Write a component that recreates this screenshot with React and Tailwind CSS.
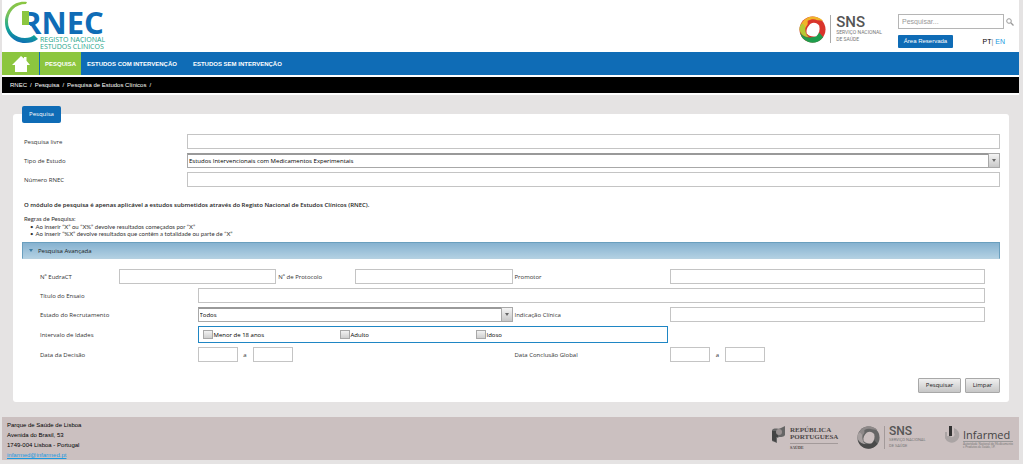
import React, { useState } from "react";

const inputClass =
  "block w-full h-[15px] px-1 bg-white border border-[#c4c4c4] text-[6px] outline-none";

const Select = ({ id, options }) => (
  <div className="relative w-full">
    <select
      id={id}
      className="block w-full h-[15px] pl-px pr-4 bg-white border border-[#a8a8a8] border-t-2 border-t-[#999999] text-[6px] leading-[11px] text-black appearance-none outline-none"
    >
      {options.map((option) => (
        <option key={option}>{option}</option>
      ))}
    </select>
    <span className="absolute right-0 top-0 w-3 h-[15px] flex items-center justify-center border border-[#a8a8a8] bg-linear-to-b from-[#f4f4f4] to-[#c8c8c8] pointer-events-none">
      <svg width="4" height="3" viewBox="0 0 4 3">
        <path d="M0 0h4L2 3z" fill="#666" />
      </svg>
    </span>
  </div>
);

const RnecLogo = () => (
  <a href="#" aria-label="RNEC" className="relative block w-[104px] h-[52px]">
    <svg className="absolute left-0 top-0" width="104" height="52" viewBox="0 0 104 52">
      <defs>
        <linearGradient id="arc" x1="0.7" y1="0" x2="0.5" y2="1">
          <stop offset="0" stopColor="#8cc63f" />
          <stop offset="0.4" stopColor="#7cc35a" />
          <stop offset="0.75" stopColor="#12a596" />
          <stop offset="1" stopColor="#0f6cb6" />
        </linearGradient>
      </defs>
      <path
        d="M25 2C12 0 3 10 3 22c0 12 9 21 20 21 5 0 9-1 13-4l-4-4c-2 2-5 3-9 3C13 38 6 31 6 22 6 12 13 4 24 4z"
        fill="url(#arc)"
      />
    </svg>
    <span className="absolute left-[19px] top-[4px] font-['Open_Sans'] font-bold text-[31px] leading-[36px] text-[#0f6cb6]">
      RNEC
    </span>
    <svg className="absolute left-0 top-0" width="104" height="52" viewBox="0 0 104 52">
      <path d="M20 25h8v9l-3 2h-5z" fill="#fff" />
      <path d="M20 11h7v14h-7z" fill="#8cc63f" />
    </svg>
    <span className="absolute left-[38px] top-[36px] font-['Open_Sans'] font-medium text-[7px] leading-[7px] text-[#1ba58a] whitespace-nowrap">
      REGISTO NACIONAL
      <br />
      ESTUDOS CLÍNICOS
    </span>
  </a>
);

const SnsLogo = ({ gray }) => {
  const colors = gray
    ? ["#666", "#8e8989", "#4a4a4a", "#a7a0a0"]
    : ["#d9342b", "#f0b429", "#1f9d4d", "#b5c934"];
  return (
    <div className="flex items-center gap-1">
      <svg
        className={gray ? "w-[23px] h-[23px]" : "w-[27px] h-[27px]"}
        viewBox="0 0 28 28"
      >
        <circle cx="14" cy="14" r="13.500" fill={colors[0]} />
        <path d="M2 9C5 2 12-1 18 1c3 1 5 2 7 4-5-1-8-1-10 2C10 7 8 9 6 14z" fill={colors[1]} />
        <path d="M0.500 14c0-3 1-5 2-6 2 0 4 2 4 5 0 4 1 7 4 9-5 0-9-3-10-8z" fill={colors[3]} />
        <path d="M1 17c3 4 7 6 12 5 4 0 6-2 8-5l4 5c-5 7-14 7-19 3-3-2-4-5-5-8z" fill={colors[2]} />
        <path d="M9 5c5-3 11-2 13 3-5-2-9-1-13 2z" fill={colors[0]} />
        <path
          d="M12 8c3-2 7-1 9 2 1 4 0 8-3 11-4 1-8 0-10-3-1-4 1-7 4-10z"
          fill={gray ? "#cbc0c0" : "#fff"}
        />
      </svg>
      <div
        className={
          gray
            ? "border-l border-[#a39a9a] pl-1 font-[Roboto] text-[#555]"
            : "border-l border-[#aaa] pl-[5px] font-[Roboto] text-[#555]"
        }
      >
        <div
          className={
            gray
              ? "text-[12px] leading-[11px] font-medium"
              : "text-[15px] leading-[14px] font-medium"
          }
        >
          SNS
        </div>
        <div
          className={
            gray
              ? "text-[4px] leading-[6px] text-[#777] whitespace-nowrap"
              : "text-[5px] leading-[7px] text-[#777] whitespace-nowrap"
          }
        >
          SERVIÇO NACIONAL
          <br />
          DE SAÚDE
        </div>
      </div>
    </div>
  );
};

const Header = () => (
  <header className="flex justify-between h-[52px] bg-white">
    <RnecLogo />
    <div className="flex items-start pr-[5px]">
      <div className="pt-[15px] pr-4">
        <SnsLogo />
      </div>
      <div className="w-[116px] pt-[14px]">
        <div className="flex items-center gap-[2px]">
          <input
            type="text"
            aria-label="Pesquisar"
            placeholder="Pesquisar..."
            className="w-[106px] h-[15px] px-[3px] border border-[#b5b5b5] text-[7px] placeholder:text-[#999] outline-none"
          />
          <svg width="8" height="8" viewBox="0 0 8 8" fill="none" stroke="#999">
            <circle cx="3" cy="3" r="2.300" />
            <path d="M4.800 4.800L7.500 7.500" strokeWidth="1.300" />
          </svg>
        </div>
        <div className="flex items-center justify-between mt-[5px] pr-[9px]">
          <button
            type="button"
            className="w-[55px] h-[13px] rounded-[1px] bg-[#0f6cb6] text-white text-[6px] leading-[13px] whitespace-nowrap"
          >
            Área Reservada
          </button>
          <div className="text-[7px] leading-[13px] pt-px">
            <a href="#pt" className="text-black">
              PT
            </a>
            <span className="text-[#888]">| </span>
            <a href="#en" className="text-[#1b9ae0]">
              EN
            </a>
          </div>
        </div>
      </div>
    </div>
  </header>
);

const Nav = () => (
  <nav className="flex h-[23px] bg-[#0f6cb6] text-white text-[6px] font-bold leading-[24px] whitespace-nowrap">
    <a
      href="#"
      aria-label="Início"
      className="w-[37px] flex items-center justify-center bg-[#8cc63f]"
    >
      <svg width="18" height="16" viewBox="0 0 18 16" fill="#fff">
        <path d="M9 0l3 2.500V1h2.500v3.700L18 9h-3v7H3V9H0z" />
      </svg>
    </a>
    <a href="#pesquisa" className="ml-px px-[5px] bg-[#8cc63f]">
      PESQUISA
    </a>
    <a href="#com" className="ml-[6px]">
      ESTUDOS COM INTERVENÇÃO
    </a>
    <a href="#sem" className="ml-4">
      ESTUDOS SEM INTERVENÇÃO
    </a>
  </nav>
);

const Breadcrumbs = () => (
  <div className="flex gap-[3px] h-[20px] pl-2 border-y-2 border-white bg-black text-white text-[6px] leading-[16px]">
    <a href="#">RNEC</a>
    <span>/</span>
    <a href="#pesquisa">Pesquisa</a>
    <span>/</span>
    <a href="#estudos">Pesquisa de Estudos Clínicos</a>
    <span>/</span>
  </div>
);

const DateRange = ({ id }) => (
  <div className="flex items-center">
    <input id={id} type="text" className="w-[40px] h-[15px] border border-[#c4c4c4]" />
    <label htmlFor={`${id}-end`} className="w-[15px] text-center">
      a
    </label>
    <input id={`${id}-end`} type="text" className="w-[40px] h-[15px] border border-[#c4c4c4]" />
  </div>
);

const AdvancedSearch = () => (
  <div className="pl-[18px] pr-[15px] pt-[10px] grid grid-cols-12 items-center gap-y-1 whitespace-nowrap">
    <label htmlFor="eudract">Nº EudraCT</label>
    <input id="eudract" type="text" className={`${inputClass} col-span-2`} />
    <label htmlFor="protocolo" className="pl-[2px]">
      Nº de Protocolo
    </label>
    <input id="protocolo" type="text" className={`${inputClass} col-span-2`} />
    <label htmlFor="promotor" className="col-span-2 pl-[2px]">
      Promotor
    </label>
    <input id="promotor" type="text" className={`${inputClass} col-span-4`} />

    <label htmlFor="titulo" className="col-span-2">
      Título do Ensaio
    </label>
    <input id="titulo" type="text" className={`${inputClass} col-span-10`} />

    <label htmlFor="estado" className="col-span-2">
      Estado do Recrutamento
    </label>
    <div className="col-span-4">
      <Select id="estado" options={["Todos"]} />
    </div>
    <label htmlFor="indicacao" className="col-span-2 pl-[2px]">
      Indicação Clínica
    </label>
    <input id="indicacao" type="text" className={`${inputClass} col-span-4`} />

    <span className="col-span-2">Intervalo de Idades</span>
    <div
      role="group"
      aria-label="Intervalo de Idades"
      className="col-span-6 grid grid-cols-[137px_136px_1fr] items-center h-[17px] mr-[2px] pl-1 border border-[#1f86c4]"
    >
      {["Menor de 18 anos", "Adulto", "Idoso"].map((age) => (
        <label key={age} className="flex items-center gap-px text-black">
          <input
            type="checkbox"
            className="appearance-none w-[10px] h-[9px] border border-[#a8a8a8] bg-linear-to-b from-[#f2f2f2] to-[#cfcfcf] checked:from-[#6fa8cc] checked:to-[#2c86bd]"
          />
          {age}
        </label>
      ))}
    </div>
    <span className="col-span-4"></span>

    <label htmlFor="decisao" className="col-span-2">
      Data da Decisão
    </label>
    <div className="col-span-4">
      <DateRange id="decisao" />
    </div>
    <label htmlFor="conclusao" className="col-span-2 pl-[2px]">
      Data Conclusão Global
    </label>
    <div className="col-span-4">
      <DateRange id="conclusao" />
    </div>
  </div>
);

const rules = [
  "Ao inserir “X” ou “X%” devolve resultados começados por “X”",
  "Ao inserir “%X” devolve resultados que contêm a totalidade ou parte de “X”",
];

const SearchForm = () => {
  const [open, setOpen] = useState(true);

  const buttonClass =
    "h-[15px] rounded-[1px] border border-[#a8a8a8] bg-linear-to-b from-[#f0f0f0] to-[#c6c6c6] text-[6px] leading-[13px] text-[#222]";

  return (
    <form
      className="rounded-[3px] bg-white px-[9px] pb-[9px] text-[6px] leading-[8px] text-[#333] font-['Open_Sans',sans-serif]"
      onSubmit={(e) => e.preventDefault()}
    >
      <h1 className="relative -top-2 w-[39px] h-[17px] rounded-[2px] bg-[#0f6cb6] text-white text-[6px] leading-[17px] text-center">
        Pesquisa
      </h1>

      <div className="grid grid-cols-[163px_1fr] items-center gap-y-1 pt-[3px] pl-[2px]">
        <label htmlFor="livre">Pesquisa livre</label>
        <input id="livre" type="text" className={inputClass} />
        <label htmlFor="tipo">Tipo de Estudo</label>
        <Select id="tipo" options={["Estudos Intervencionais com Medicamentos Experimentais"]} />
        <label htmlFor="rnec">Número RNEC</label>
        <input id="rnec" type="text" className={inputClass} />
      </div>

      <div className="pl-[2px]">
        <p className="mt-[14px] font-semibold leading-[9px] text-[#222]">
          O módulo de pesquisa é apenas aplicável a estudos submetidos através do Registo
          Nacional de Estudos Clínicos (RNEC).
        </p>
        <p className="mt-[5px] font-[Lato]">Regras de Pesquisa:</p>
        <ul className="pl-[6px] leading-[7px] font-[Lato]">
          {rules.map((rule) => (
            <li key={rule} className="flex gap-[2px]">
              <span aria-hidden="true">•</span>
              {rule}
            </li>
          ))}
        </ul>
      </div>

      <button
        type="button"
        aria-expanded={open}
        onClick={() => setOpen(!open)}
        className="flex items-center gap-[5px] w-full h-[17px] mt-[5px] pl-[6px] border border-[#6a9fbe] border-b-[#b5d0e0] bg-linear-to-b from-[#86b2d0] to-[#b2d0e2] text-[#222]"
      >
        <svg width="4" height="3" viewBox="0 0 4 3">
          <path d="M0 0h4L2 3z" fill="#3f7ea5" />
        </svg>
        Pesquisa Avançada
      </button>
      {open && <AdvancedSearch />}

      <div className="flex justify-end gap-1 mt-4">
        <button type="submit" className={`${buttonClass} w-[43px]`}>
          Pesquisar
        </button>
        <button type="reset" className={`${buttonClass} w-[35px]`}>
          Limpar
        </button>
      </div>
    </form>
  );
};

const Footer = () => (
  <footer className="flex justify-between h-[43px] mt-[15px] pl-[5px] pr-[9px] bg-[#cbc0c0]">
    <address className="pt-[3px] not-italic text-[6px] leading-[10px] text-black whitespace-nowrap">
      Parque de Saúde de Lisboa
      <br />
      Avenida do Brasil, 53
      <br />
      1749-004 Lisboa - Portugal
      <br />
      <a href="mailto:infarmed@infarmed.pt" className="text-[#1b9ae0] underline">
        infarmed@infarmed.pt
      </a>
    </address>
    <div className="flex items-start pt-[9px]">
      <div className="flex gap-1 w-[86px]">
        <svg width="15" height="17" viewBox="0 0 15 17">
          <path d="M1 4c3-3 6 0 9-2l4-2v9c-2 3-5 1-8 3v5l-5-2z" fill="#666" />
          <path d="M1 5h6v6H5v5L1 14z" fill="#444" />
          <circle cx="8" cy="6" r="3" fill="#999191" />
        </svg>
        <div className="pt-px font-['Liberation_Serif'] font-bold text-[7px] leading-[7px] text-[#4c4848]">
          REPÚBLICA
          <br />
          PORTUGUESA
          <div className="mt-[2px] border-t border-[#a39a9a] pt-px text-[4px] leading-[5px]">
            SAÚDE
          </div>
        </div>
      </div>
      <div className="w-[88px]">
        <SnsLogo gray />
      </div>
      <div className="flex gap-[3px] w-[65px]">
        <svg width="15" height="17" viewBox="0 0 15 17" className="shrink-0">
          <path d="M9 2v5a2.500 2.500 0 1 1-4 3H2V6H0a7.500 7.500 0 1 0 9-4z" fill="#aaa4a4" />
          <path d="M4 0h3v10H4z" fill="#333" />
        </svg>
        <div className="pt-[3px] font-['Open_Sans'] text-[#444] whitespace-nowrap">
          <div className="text-[11px] leading-[12px] font-medium">Infarmed</div>
          <div className="border-t border-[#999] font-[Lato] text-[3px] leading-[3px] pt-px text-[#777]">
            Autoridade Nacional do Medicamento
            <br />e Produtos de Saúde, I.P.
          </div>
        </div>
      </div>
    </div>
  </footer>
);

const App = () => (
  <div className="min-h-screen pl-[2px] pr-1 bg-[#e5e3e3] font-['Liberation_Sans',sans-serif]">
    <Header />
    <Nav />
    <Breadcrumbs />
    <main className="pt-[19px] pl-[11px] pr-[10px]">
      <SearchForm />
    </main>
    <Footer />
  </div>
);

export default App;
